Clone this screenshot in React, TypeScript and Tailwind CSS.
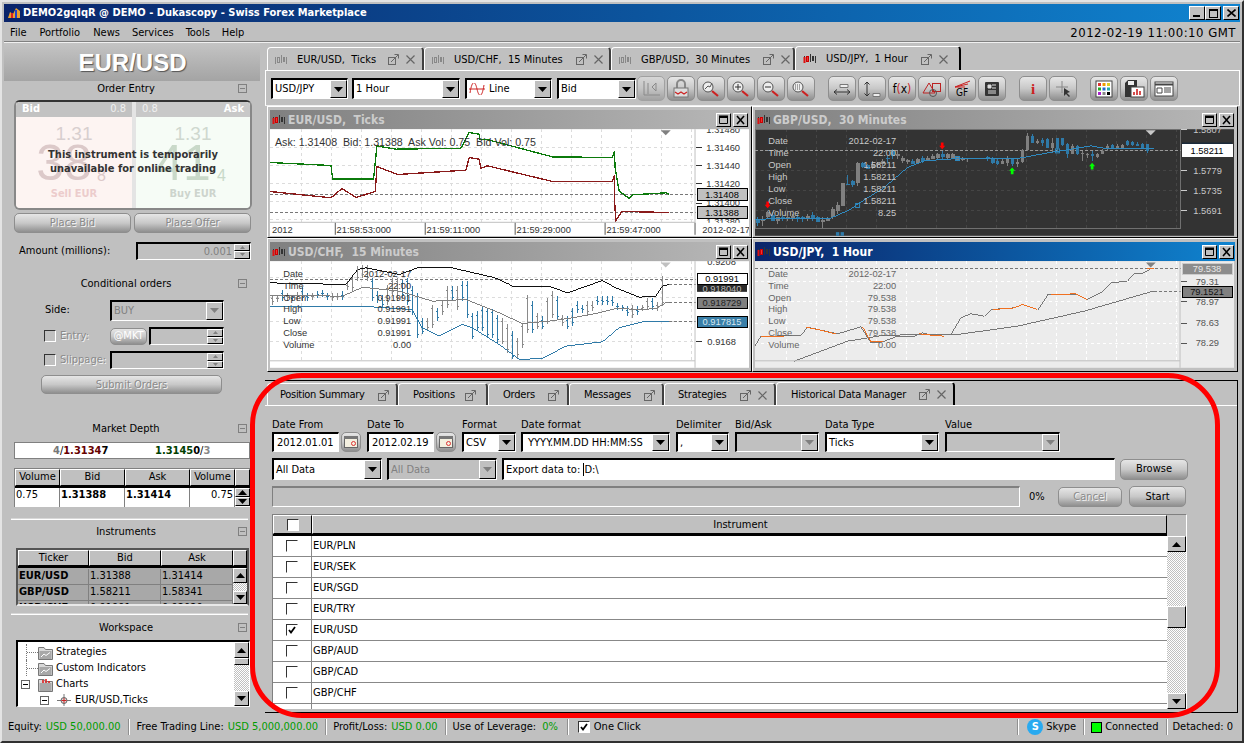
import React from "react";

const sunken = "border-t-2 border-l-2 border-b border-r border-t-black border-l-black border-b-white border-r-white";
const raised = "border border-t-white border-l-white border-b-black border-r-black bg-[#c0c0c0]";
const gradBtn = "flex items-center justify-center rounded-[5px] border border-[#8e8e8e] bg-gradient-to-b from-[#e6e6e6] via-[#c8c8c8] to-[#8f8f8f]";
const disText = "text-[#8a8a8a] [text-shadow:1px_1px_0_#f4f4f4]";
const chartFont = "font-['Liberation_Sans',sans-serif] whitespace-pre";

const Tri = ({ up = false, dim = false }: { up?: boolean; dim?: boolean }) => (
  <svg width="9" height="5" viewBox="0 0 9 5" className="shrink-0">
    <path d={up ? "M4.5 0 L9 5 L0 5 Z" : "M0 0 L9 0 L4.5 5 Z"} fill={dim ? "#808080" : "#000"} />
  </svg>
);

const Select = ({ w, h = "h-[21px]", children, dim = false }: { w: string; h?: string; children?: React.ReactNode; dim?: boolean }) => (
  <div className={`${w} ${h} shrink-0 flex ${sunken} ${dim ? "bg-[#c0c0c0] text-[#808080]" : "bg-white"}`}>
    <div className="flex-1 min-w-0 flex items-center pl-[2px] whitespace-nowrap overflow-hidden">{children}</div>
    <div className={`${raised} w-[17px] flex items-center justify-center`}><Tri dim={dim} /></div>
  </div>
);

const Spinner = ({ w, value }: { w: string; value?: string }) => (
  <div className={`${w} h-[18px] flex ${sunken} text-[#808080]`}>
    <div className="flex-1 text-right pr-[2px] leading-[15px]">{value}</div>
    <div className="w-[16px] flex flex-col">
      <div className={`${raised} flex-1 flex items-center justify-center`}><svg width="5" height="3"><path d="M2.5 0L5 3H0Z" fill="#808080" /></svg></div>
      <div className={`${raised} flex-1 flex items-center justify-center`}><svg width="5" height="3"><path d="M0 0H5L2.5 3Z" fill="#808080" /></svg></div>
    </div>
  </div>
);

const Collapse = () => (
  <div className="w-[9px] h-[9px] border border-[#808080] flex items-center justify-center shrink-0">
    <div className="w-[5px] h-px bg-[#808080]" />
  </div>
);

const Heading = ({ children, cls }: { children: React.ReactNode; cls: string }) => (
  <div className={`flex items-center h-[15px] ${cls}`}>
    <div className="ml-[10px] w-[224px] text-center">{children}</div>
    <Collapse />
  </div>
);

const CandleIcon = ({ color = false }: { color?: boolean }) => (
  <svg width="14" height="12" viewBox="0 0 14 12" className="shrink-0">
    <g stroke={color ? "#333" : "#888"} fill="none">
      <path d="M1.5 3V10M7.5 1V9M12.5 3V10" />
      <rect x="3.5" y="3.5" width="2" height="5" stroke={color ? "#c00" : "#888"} fill={color ? "#e33" : "none"} />
      <rect x="9.5" y="3.5" width="1" height="4" />
    </g>
    {color && <path d="M0.5 4h2v6h-2z" fill="#d11" />}
  </svg>
);

const Popout = () => (
  <svg width="11" height="11" viewBox="0 0 11 11" className="shrink-0">
    <rect x="0.5" y="3.5" width="7" height="7" fill="none" stroke="#666" />
    <path d="M3 8L10 1M6.5 0.5H10.5V4.5" fill="none" stroke="#666" />
  </svg>
);
const CloseX = () => (
  <svg width="9" height="9" viewBox="0 0 9 9" className="shrink-0">
    <path d="M0.5 0.5L8.5 8.5M8.5 0.5L0.5 8.5" stroke="#666" strokeWidth="1.2" />
  </svg>
);

const Tab = ({ w, label, active = false, close = true, icon = true, popGap, closeGap = "ml-[7px]", pl, hc, lc = "" }: { w: string; label: string; active?: boolean; close?: boolean; icon?: boolean; popGap: string; closeGap?: string; pl: string; hc?: string; lc?: string }) => (
  <div className={`${w} ${hc ?? (active ? "h-[24px]" : "h-[23px] mt-px")} ${active ? "border-r-2 border-r-black" : "border-r-2 border-r-[#404040]"} shrink-0 flex items-center ${pl} pt-px rounded-t-[4px] border-t border-l border-t-white border-l-white whitespace-nowrap`}>
    {icon && <div className="mr-[9px]"><CandleIcon color={active} /></div>}
    <span className={lc}>{label}</span>
    <div className={popGap}><Popout /></div>
    {close && <div className={closeGap}><CloseX /></div>}
  </div>
);

const ToolBtn = ({ ml = "ml-[2px]", children, dim = false }: { ml?: string; children: React.ReactNode; dim?: boolean }) => (
  <div className={`${ml} w-[28px] h-[25px] shrink-0 ${gradBtn} ${dim ? "opacity-60" : ""}`}>
    <svg width="22" height="20" viewBox="0 0 22 20">{children}</svg>
  </div>
);

const Mag = ({ children }: { children?: React.ReactNode }) => (
  <g>
    <circle cx="8" cy="8" r="5" fill="#eee" stroke="#555" />
    <path d="M12 12L18 17" stroke="#c22" strokeWidth="2.2" />
    {children}
  </g>
);

const gridV = (x0: number, x1: number, step: number, y0: number, y1: number, color: string) => {
  const out: React.ReactNode[] = [];
  for (let x = x0; x < x1; x += step) out.push(<line key={`v${x}`} x1={x} x2={x} y1={y0} y2={y1} stroke={color} strokeWidth="3" strokeDasharray="9 9" shapeRendering="crispEdges" />);
  return out;
};
const gridH = (ys: number[], x0: number, x1: number, color: string) =>
  ys.map((y) => <line key={`h${y}`} x1={x0} x2={x1} y1={y} y2={y} stroke={color} strokeWidth="3" strokeDasharray="9 9" shapeRendering="crispEdges" />);

const Line = ({ p, c, w = 3 }: { p: string; c: string; w?: number }) => <polyline points={p} fill="none" stroke={c} strokeWidth={w} shapeRendering="crispEdges" />;

const Dash = ({ y, x0, x1, c }: { y: number; x0: number; x1: number; c: string }) => (
  <line x1={x0} x2={x1} y1={y} y2={y} stroke={c} strokeWidth="3" strokeDasharray="9 6" shapeRendering="crispEdges" />
);

const Txt = ({ x, y, c, children, end = false, size = 28 }: { x: number; y: number; c: string; children: React.ReactNode; end?: boolean; size?: number }) => (
  <text x={x} y={y + 10} fontSize={size} fill={c} textAnchor={end ? "end" : "start"} className={chartFont}>{children}</text>
);

const Box = ({ y, h = 34, bg, bd, tc, children }: { y: number; h?: number; bg: string; bd: string; tc: string; children: React.ReactNode }) => (
  <g>
    <rect x="1294" y={y} width="150" height={h} fill={bg} stroke={bd} strokeWidth="3" shapeRendering="crispEdges" />
    <text x="1369" y={y + h / 2 + 10} fontSize="28" fill={tc} textAnchor="middle" className={chartFont}>{children}</text>
  </g>
);

const Tick = ({ y, c }: { y: number; c: string }) => <line x1="1290" x2="1310" y1={y} y2={y} stroke={c} strokeWidth="3" shapeRendering="crispEdges" />;

const Info = ({ vals, c, ys }: { vals: string[]; c: string; ys: number[] }) => (
  <g>
    {["Date", "Time", "Open", "High", "Low", "Close", "Volume"].map((l, i) => <Txt key={l} x={52} y={ys[i]} c={c}>{l}</Txt>)}
    {vals.map((v, i) => <Txt key={i} x={436} y={ys[i]} c={c} end>{v}</Txt>)}
  </g>
);

const Chart1 = () => (
  <svg viewBox="12 75 1438 320" className="w-[479px] h-[107px] block">
    <rect x="12" y="75" width="1438" height="320" fill="#fff" />
    {gridV(108, 1288, 90, 75, 355, "#dcdcdc")}
    {gridH([130, 184, 238, 292, 346], 12, 1288, "#dcdcdc")}
    <Dash y={271} x0={12} x1={1290} c="#777" />
    <Dash y={325} x0={12} x1={1290} c="#777" />
    <Line c="#0b7a0b" w={4} p="12,175 195,184 200,224 323,224 333,125 390,135 585,132 610,85 640,90 642,105 660,105 860,158 1040,160 1046,142 1048,190 1060,260 1090,283 1100,272 1200,266 1210,271" />
    <Line c="#8a1a1a" w={4} p="12,262 195,281 228,253 270,280 328,262 333,187 395,211 600,198 610,160 640,165 645,192 665,185 860,232 1040,232 1046,212 1046,280 1050,350 1068,322 1210,325" />
    <Txt x={27} y={114} c="#333" size={32}>Ask: 1.31408  Bid: 1.31388  Ask Vol: 0.75  Bid Vol: 0.75</Txt>
    <path d="M1185 78H1215L1200 93Z" fill="#808080" />
    <line x1="1288" x2="1288" y1="75" y2="395" stroke="#c0c0c0" strokeWidth="3" />
    {[130, 184, 238, 297].map((y) => <Tick key={y} y={y} c="#333" />)}
    {[["1.31480", 76], ["1.31460", 130], ["1.31440", 184], ["1.31420", 238], ["1.31400", 296], ["1.31380", 352]].map(([t, y]) => <Txt key={t} x={1322} y={y as number} c="#333">{t}</Txt>)}
    <Box y={254} bg="#c0c0c0" bd="#000" tc="#000">1.31408</Box>
    <Box y={308} bg="#c0c0c0" bd="#000" tc="#000">1.31388</Box>
    <rect x="12" y="356" width="1438" height="39" fill="#fff" />
    <rect x="12" y="353" width="1276" height="3" fill="#c0c0c0" />
    {[208, 478, 748, 1018, 1288].map((x) => <line key={x} x1={x} x2={x} y1="356" y2="392" stroke="#555" strokeWidth="3" />)}
    <Txt x={18} y={376} c="#333">2012</Txt>
    {[[212, "21:58:53:000"], [482, "21:59:11:000"], [752, "21:59:29:000"], [1022, "21:59:47:000"]].map(([x, t]) => <Txt key={t} x={x as number} y={376} c="#333">{t}</Txt>)}
    <Txt x={1310} y={376} c="#333">2012-02-17</Txt>
  </svg>
);

const bars: [number, number, number, number][] = [
  [20, 570, 600, 0], [35, 570, 592, 0], [50, 555, 590, 1], [65, 565, 590, 0], [80, 570, 590, 1], [95, 562, 585, 0], [110, 548, 590, 1], [125, 565, 590, 1], [140, 565, 585, 0], [155, 560, 580, 1], [170, 555, 578, 1], [185, 565, 585, 1], [200, 565, 590, 0], [215, 565, 585, 0], [230, 560, 585, 1],
  [245, 530, 555, 0], [260, 510, 560, 0], [275, 485, 530, 0], [290, 480, 520, 0], [305, 480, 530, 0], [320, 520, 590, 1], [335, 560, 595, 1], [350, 570, 610, 1], [365, 540, 600, 0], [380, 520, 570, 0], [395, 520, 590, 0], [410, 525, 580, 1], [425, 520, 600, 1], [440, 545, 630, 1], [455, 565, 700, 1], [470, 640, 690, 1], [485, 640, 680, 0], [500, 600, 670, 0], [515, 610, 650, 1], [530, 590, 630, 0], [545, 545, 610, 0], [560, 545, 590, 1], [575, 545, 615, 0], [590, 530, 590, 1], [605, 530, 640, 1],
  [620, 625, 705, 1], [635, 620, 680, 1], [650, 605, 680, 1], [665, 610, 700, 1], [680, 612, 700, 1], [695, 630, 715, 1], [710, 640, 720, 0], [725, 660, 745, 0], [740, 680, 765, 1], [755, 700, 760, 0], [770, 655, 730, 0], [785, 570, 685, 0], [800, 590, 685, 1], [815, 625, 675, 0], [830, 635, 675, 1], [845, 580, 660, 0], [860, 560, 640, 0], [875, 575, 645, 1], [890, 630, 665, 0], [905, 635, 675, 1], [920, 610, 665, 1], [935, 590, 625, 1], [950, 600, 625, 1], [965, 590, 630, 0], [980, 590, 620, 0], [995, 575, 600, 1], [1010, 575, 600, 1], [1025, 575, 600, 1], [1040, 575, 605, 1], [1055, 595, 615, 1], [1070, 600, 620, 1], [1085, 605, 635, 1], [1100, 600, 640, 0], [1115, 605, 630, 1], [1130, 600, 620, 0], [1145, 580, 615, 0], [1160, 580, 615, 1], [1175, 592, 618, 0], [1190, 515, 605, 0],
];

const Chart2 = () => (
  <svg viewBox="12 470 1438 320" className="w-[479px] h-[107px] block">
    <rect x="12" y="470" width="1438" height="320" fill="#fff" />
    {gridV(108, 1288, 90, 470, 768, "#dcdcdc")}
    {gridH([520, 580, 650, 710], 12, 1288, "#dcdcdc")}
    <Dash y={524} x0={12} x1={1290} c="#777" />
    {bars.map(([x, a, b, k]) => (
      <g key={x} stroke={k ? "#2f7aa8" : "#8a8a8a"} strokeWidth="3" shapeRendering="crispEdges">
        <line x1={x} x2={x} y1={a} y2={b} />
        <line x1={x - 5} x2={x} y1={a + 12} y2={a + 12} />
        <line x1={x} x2={x + 5} y1={b - 10} y2={b - 10} />
      </g>
    ))}
    <Line c="#111" p="12,535 240,540 275,495 300,490 400,510 460,488 550,488 680,518 740,545 850,545 905,565 1010,528 1050,550 1120,578 1170,575 1190,545 1210,540" />
    <Line c="#808080" p="12,572 230,575 290,548 400,560 500,590 600,585 700,625 770,657 850,650 920,640 1000,625 1050,612 1130,615 1170,612 1200,595 1210,595" />
    <Line c="#2f7aa8" p="12,606 300,606 440,615 470,670 520,695 590,660 620,670 700,720 760,765 830,762 900,725 1010,712 1060,670 1130,652 1210,652" />
    <Dash y={541} x0={1210} x1={1290} c="#777" />
    <Dash y={595} x0={1210} x1={1290} c="#777" />
    <Dash y={652} x0={1210} x1={1290} c="#777" />
    <Info c="#333" ys={[506, 542, 578, 614, 650, 686, 722]} vals={["2012-02-17", "22:00", "0.91991", "0.91991", "0.91991", "0.91991", "0.00"]} />
    <path d="M1185 474H1215L1200 489Z" fill="#c0c0c0" />
    <line x1="1288" x2="1288" y1="470" y2="790" stroke="#c0c0c0" strokeWidth="3" />
    <line x1="12" x2="1288" y1="769" y2="769" stroke="#c0c0c0" strokeWidth="3" />
    <Tick y={712} c="#333" />
    <Txt x={1325} y={472} c="#333">0.9208</Txt>
    <Txt x={1325} y={712} c="#333">0.9168</Txt>
    <rect x="1294" y="538" width="150" height="24" fill="#2a2a2a" />
    <text x="1369" y="562" fontSize="28" fill="#bbb" textAnchor="middle" className={chartFont}>0.918040</text>
    <Box y={506} bg="#fff" bd="#000" tc="#000">0.91991</Box>
    <Box y={578} bg="#808080" bd="#000" tc="#222">0.918729</Box>
    <Box y={635} bg="#3a7fa8" bd="#000" tc="#d8e8f0">0.917815</Box>
  </svg>
);

const candles: [number, number, number, number, number, number][] = [
  [20, 340, 365, 345, 358, 1], [35, 335, 365, 345, 352, 0], [50, 320, 345, 325, 340, 0], [65, 325, 350, 332, 350, 1], [80, 340, 360, 340, 350, 0], [95, 335, 350, 340, 346, 1], [110, 335, 350, 338, 345, 0], [125, 330, 350, 336, 342, 0], [140, 330, 355, 340, 345, 1], [155, 335, 355, 340, 344, 1], [170, 330, 350, 336, 342, 0], [185, 325, 350, 332, 342, 1], [200, 335, 355, 338, 355, 1], [215, 340, 372, 348, 355, 0], [230, 340, 350, 341, 350, 0], [245, 310, 345, 315, 340, 0], [260, 295, 330, 302, 320, 0], [275, 235, 305, 237, 305, 0], [290, 212, 243, 240, 243, 1], [305, 228, 248, 230, 243, 1], [320, 172, 245, 176, 235, 0], [335, 172, 190, 175, 188, 1], [350, 178, 195, 182, 195, 1], [365, 170, 195, 180, 190, 0], [380, 172, 190, 175, 182, 0], [395, 165, 185, 170, 178, 0], [410, 155, 175, 160, 165, 1], [425, 135, 165, 140, 155, 1], [440, 140, 165, 148, 155, 0], [455, 155, 175, 160, 170, 0], [470, 165, 178, 168, 174, 0], [485, 165, 180, 170, 178, 1], [500, 160, 178, 165, 175, 0], [515, 155, 175, 160, 170, 1], [530, 155, 170, 160, 168, 0], [545, 150, 165, 155, 165, 0], [560, 145, 165, 150, 160, 0], [575, 140, 165, 150, 158, 1], [590, 145, 165, 148, 162, 0], [605, 145, 165, 150, 162, 0], [620, 155, 170, 158, 168, 0], [635, 158, 170, 160, 168, 0], [650, 160, 172, 162, 165, 0], [710, 155, 170, 158, 165, 1], [725, 158, 178, 165, 175, 1], [740, 165, 182, 170, 178, 1], [755, 165, 180, 170, 178, 0], [770, 155, 185, 160, 175, 0], [785, 160, 185, 160, 180, 1], [800, 165, 188, 172, 180, 0], [815, 135, 175, 138, 172, 0], [830, 85, 140, 95, 138, 0], [845, 90, 115, 95, 115, 1], [860, 105, 120, 110, 115, 0], [875, 102, 125, 108, 115, 1], [890, 100, 130, 104, 130, 1], [905, 100, 145, 115, 130, 0], [920, 100, 140, 102, 130, 1], [935, 100, 125, 102, 122, 1], [950, 115, 160, 120, 150, 1], [965, 120, 150, 125, 150, 0], [980, 122, 152, 125, 150, 1], [995, 140, 170, 145, 150, 0], [1010, 145, 160, 150, 152, 0], [1025, 140, 170, 148, 155, 1], [1040, 145, 160, 148, 158, 0], [1055, 135, 150, 140, 150, 0], [1070, 120, 140, 124, 135, 0], [1085, 120, 135, 122, 132, 1], [1100, 118, 132, 124, 130, 0], [1115, 120, 130, 122, 130, 0], [1130, 108, 125, 110, 122, 1], [1145, 110, 125, 112, 122, 1], [1160, 112, 125, 120, 125, 1], [1175, 115, 130, 120, 130, 1], [1190, 118, 145, 120, 140, 1],
];

const UpArrow = ({ x, y, c }: { x: number; y: number; c: string }) => (
  <path d={`M${x} ${y - 10}L${x + 9} ${y}H${x + 4}V${y + 10}H${x - 4}V${y}H${x - 9}Z`} fill={c} />
);
const DownArrow = ({ x, y, c }: { x: number; y: number; c: string }) => (
  <path d={`M${x} ${y + 10}L${x + 9} ${y}H${x + 4}V${y - 10}H${x - 4}V${y}H${x - 9}Z`} fill={c} />
);

const Chart3 = () => (
  <svg viewBox="12 75 1438 320" className="w-[479px] h-[107px] block">
    <rect x="12" y="75" width="1438" height="320" fill="#333" />
    {gridV(108, 1288, 90, 75, 372, "#454545")}
    {gridH([140, 200, 260, 320], 12, 1288, "#454545")}
    <rect x="13" y="76" width="1275" height="296" fill="none" stroke="#707070" strokeWidth="3" shapeRendering="crispEdges" />
    <Dash y={138} x0={12} x1={1290} c="#999" />
    {candles.map(([x, a, b, t, bt, k]) => (
      <g key={x} shapeRendering="crispEdges" fill={k ? "#2f7aa8" : "#808080"}>
        <rect x={x - 1} y={a} width="3" height={b - a} />
        <rect x={x - 5} y={t} width="11" height={bt - t} />
      </g>
    ))}
    <Line c="#2f8ac0" p="12,345 240,342 300,315 320,300 400,250 470,190 520,170 620,163 800,163 880,148 960,135 1020,125 1060,132 1210,133" />
    {[[320, 304], [620, 163], [920, 140]].map(([x, y]) => <rect key={x} x={x - 6} y={y - 6} width="12" height="12" fill="none" stroke="#2f8ac0" strokeWidth="3" />)}
    <rect x="255" y="384" width="10" height="11" fill="#2f7aa8" /><rect x="269" y="384" width="10" height="11" fill="#2f7aa8" />
    <DownArrow x={50} y={302} c="#f00" />
    <DownArrow x={574} y={125} c="#f00" />
    <UpArrow x={784} y={200} c="#0f0" />
    <UpArrow x={1024} y={186} c="#0f0" />
    <Info c="#c8c8c8" ys={[110, 146, 182, 218, 254, 290, 326]} vals={["2012-02-17", "22:00", "1.58211", "1.58211", "1.58211", "1.58211", "8.25"]} />
    <path d="M1185 78H1215L1200 93Z" fill="#c8c8c8" />
    {[200, 260, 320].map((y) => <Tick key={y} y={y} c="#ccc" />)}
    <Tick y={76} c="#ccc" />
    <Txt x={1328} y={76} c="#c8c8c8">1.5807</Txt>
    <Txt x={1328} y={200} c="#c8c8c8">1.5779</Txt>
    <Txt x={1328} y={260} c="#c8c8c8">1.5735</Txt>
    <Txt x={1328} y={320} c="#c8c8c8">1.5691</Txt>
    <rect x="1294" y="115" width="150" height="8" fill="#1a2a3a" />
    <Box y={122} bg="#fff" bd="#fff" tc="#000">1.58211</Box>
  </svg>
);

const Chart4 = () => (
  <svg viewBox="12 470 1438 320" className="w-[479px] h-[107px] block">
    <rect x="12" y="470" width="1438" height="320" fill="#ececec" />
    {gridV(108, 1288, 90, 470, 768, "#fff")}
    {gridH([532, 592, 656, 716], 12, 1288, "#fff")}
    <Dash y={493} x0={12} x1={1290} c="#777" />
    <Dash y={562} x0={1210} x1={1290} c="#777" />
    <Line c="#777" p="130,770 290,710 400,692 620,690 800,665 1000,620 1200,562 1210,562" />
    <Line c="#777" p="12,725 30,695 60,695 150,693 170,668 200,675 260,688 330,667 360,715 395,712 440,695 490,695 515,685 540,692 600,690 630,640 660,628 700,635 720,615 790,610 815,600 860,615 890,570 980,570 1010,585 1050,565 1080,535 1130,530 1150,508 1180,505 1200,493 1210,493" />
    <g>
      <Line c="#f07020" p="30,695 60,695 100,695" />
      <Line c="#f07020" p="165,668 200,675 255,688" />
      <Line c="#f07020" p="335,667 360,712 395,712" />
      <Line c="#f07020" p="505,688 540,692 580,695" />
      <Line c="#f07020" p="725,615 790,610 815,600 860,615" />
      <Line c="#f07020" p="900,570 975,568 1010,585" />
      <Line c="#f07020" p="1190,493 1210,493" />
    </g>
    <Info c="#666" ys={[506, 542, 578, 614, 650, 686, 722]} vals={["2012-02-17", "22:00", "79.538", "79.538", "79.538", "79.538", "0.00"]} />
    <path d="M1185 474H1215L1200 489Z" fill="#808080" />
    <line x1="1288" x2="1288" y1="470" y2="790" stroke="#c0c0c0" strokeWidth="3" />
    <line x1="12" x2="1288" y1="769" y2="769" stroke="#c0c0c0" strokeWidth="3" />
    {[532, 592, 656, 716].map((y) => <Tick key={y} y={y} c="#555" />)}
    {[["79.31", 532], ["78.97", 592], ["78.63", 656], ["78.29", 716]].map(([t, y]) => <Txt key={t} x={1335} y={y as number} c="#555">{t}</Txt>)}
    <Box y={476} bg="#8c8c8c" bd="#ccc" tc="#e8e8e8">79.538</Box>
    <Box y={545} bg="#808080" bd="#000" tc="#111">79.1521</Box>
  </svg>
);

const WinBtn = ({ kind }: { kind: "max" | "close" }) => (
  <div className={`${raised} w-[15px] h-[14px] flex items-center justify-center`}>
    <svg width="11" height="10" viewBox="0 0 11 10">
      {kind === "max" ? <path d="M1.5 1.5H9.5V8.5H1.5Z M1 1H10" fill="none" stroke="#000" strokeWidth="1" /> : <path d="M2 1L9 9M9 1L2 9" stroke="#000" strokeWidth="1.6" />}
      {kind === "max" && <rect x="1" y="1" width="9" height="2" fill="#000" />}
    </svg>
  </div>
);

const ChartWin = ({ title, active = false, h, children }: { title: string; active?: boolean; h: string; children: React.ReactNode }) => (
  <div className={`${h} border border-t-white border-l-white border-b-black border-r-black pt-[3px] px-[2px]`}>
    <div className={`h-[19px] flex items-center pl-[2px] pr-[1px] ${active ? "bg-gradient-to-r from-[#0a246a] to-[#1084d0] text-white" : "bg-gradient-to-r from-[#808080] to-[#b8b8b8] text-[#cccccc]"}`}>
      <CandleIcon color />
      <span className="ml-[2px] text-[12px] font-bold whitespace-pre flex-1">{title}</span>
      <div className="flex gap-[2px]"><WinBtn kind="max" /><WinBtn kind="close" /></div>
    </div>
    {children}
  </div>
);

const Check = ({ on = false, dim = false, cls = "" }: { on?: boolean; dim?: boolean; cls?: string }) => (
  <div className={`w-[12px] h-[12px] ${cls} border-t border-l border-t-[#333] border-l-[#333] border-b border-r border-b-white border-r-white ${dim ? "" : "bg-white"} flex items-center justify-center shrink-0`}>
    {on && <svg width="8" height="8" viewBox="0 0 8 8"><path d="M1 4L3 6.5L7 1" fill="none" stroke="#000" strokeWidth="1.8" /></svg>}
  </div>
);

const ScrollBtn = ({ up = false, cls }: { up?: boolean; cls: string }) => (
  <div className={`${raised} ${cls} flex items-center justify-center shrink-0`}><Tri up={up} /></div>
);
const checker = "bg-[repeating-conic-gradient(#c0c0c0_0_25%,#fff_0_50%)] bg-[length:2px_2px]";

const Cal = () => (
  <div className={`ml-[2px] w-[20px] h-[20px] shrink-0 ${gradBtn}`}>
    <svg width="14" height="12" viewBox="0 0 14 12">
      <rect x="0.5" y="0.5" width="13" height="11" fill="#f4f0e0" stroke="#666" />
      <rect x="0" y="0" width="14" height="3" fill="#777" />
      <circle cx="9.5" cy="7.5" r="2" fill="none" stroke="#d33" />
    </svg>
  </div>
);

const Field = ({ label, ml, children }: { label: string; ml: string; children: React.ReactNode }) => (
  <div className={`${ml} flex flex-col shrink-0`}>
    <div className="h-[15px] leading-[15px] whitespace-nowrap">{label}</div>
    <div className="flex">{children}</div>
  </div>
);

const rows = [["EUR/PLN"], ["EUR/SEK"], ["EUR/SGD"], ["EUR/TRY"], ["EUR/USD", true], ["GBP/AUD"], ["GBP/CAD"], ["GBP/CHF"]] as [string, boolean?][];

const Folder = ({ open = false }: { open?: boolean }) => (
  <svg width="15" height="15" viewBox="0 0 15 15" className="shrink-0">
    <path d="M0.5 2.5H6L7.5 4.5H14.5V14.5H0.5Z" fill="#d8d8d8" stroke="#777" />
    <rect x="1.5" y="6" width="12" height="8" fill="#a8a8a8" />
    {open ? <path d="M5 6V3M8 6V2M11 6V4" stroke="#d22" strokeWidth="1.6" /> : <path d="M3 12L6 9L8 10.5L12 7.5" fill="none" stroke="#fff" />}
  </svg>
);

const Expander = () => (
  <div className="w-[9px] h-[9px] border border-[#666] bg-white flex items-center justify-center shrink-0">
    <div className="w-[5px] h-px bg-black" />
  </div>
);

const Connector = () => (
  <div className="w-[12px] h-full border-l border-dotted border-l-[#777] flex items-center shrink-0">
    <div className="w-full border-t border-dotted border-t-[#777]" />
  </div>
);

const Sep = ({ ml }: { ml: string }) => <div className={`${ml} w-[2px] h-[16px] bg-[#909090] border-r border-r-white shrink-0`} />;

export default function App() {
  return (
    <div className="relative w-[1244px] h-[743px] overflow-hidden bg-[#c0c0c0] text-black text-[11px] leading-[14px] font-['DejaVu_Sans_Condensed','DejaVu_Sans',sans-serif]">
      <div className="w-full h-full flex flex-col p-[2px] border-[2px] border-t-[#e4e4e4] border-l-[#e4e4e4] border-b-[#303030] border-r-[#303030]">
        {/* title bar */}
        <div className="h-[18px] shrink-0 flex items-center pl-[3px] pr-[1px] bg-gradient-to-r from-[#0a246a] to-[#1084d0] text-white text-[11px] font-bold">
          <svg width="14" height="14" viewBox="0 0 14 14" className="shrink-0 mr-[2px]">
            <path d="M1 12L3 6L6 8L9 2L13 5V12Z" fill="#e8a030" />
            <path d="M4 12V7H6V12Z" fill="#d22" /><path d="M8 12V4H10V12Z" fill="#2244cc" />
          </svg>
          <span className="flex-1 whitespace-nowrap">DEMO2gqIqR @ DEMO - Dukascopy - Swiss Forex Marketplace</span>
          <div className="flex">
            <div className={`${raised} w-[16px] h-[14px] flex items-end pl-[3px] pb-[2px]`}><div className="w-[7px] h-[2px] bg-black" /></div>
            <div className={`${raised} w-[16px] h-[14px] flex items-center justify-center`}><div className="w-[9px] h-[9px] border border-black border-t-2" /></div>
            <div className={`${raised} ml-[2px] w-[16px] h-[14px] flex items-center justify-center`}><svg width="9" height="8"><path d="M0.5 0.5L8.5 7.5M8.5 0.5L0.5 7.5" stroke="#000" strokeWidth="1.6" /></svg></div>
          </div>
        </div>
        {/* menu */}
        <div className="h-[21px] shrink-0 flex items-center pl-[6px] pt-px border-b border-b-[#f0f0f0] shadow-[inset_0_-1px_0_#808080]">
          <span>File</span><span className="ml-[13px]">Portfolio</span><span className="ml-[13px]">News</span><span className="ml-[12px]">Services</span><span className="ml-[12px]">Tools</span><span className="ml-[12px]">Help</span>
          <span className="ml-auto mr-[4px] text-[13px] tracking-[0.5px]">2012-02-19 11:00:10 GMT</span>
        </div>
        {/* main */}
        <div className="h-[674px] shrink-0 flex">
          {/* left */}
          <div className="w-[256px] shrink-0 flex flex-col">
            <div className="h-[38px] shrink-0 flex items-center justify-center pt-px pl-px bg-gradient-to-b from-[#c4c4c4] to-[#a4a4a4] text-white text-[24px] font-bold font-['Liberation_Sans',sans-serif] [text-shadow:1px_1px_1px_#555]">EUR/USD</div>
            <Heading cls="">Order Entry</Heading>
            <div className="relative ml-[10px] mt-[4px] w-[238px] h-[110px] shrink-0 rounded-[6px] border-2 border-t-[#333] border-l-[#888] border-r-[#888] border-b-[#888] overflow-hidden flex bg-[#e8e8e8]">
              <div className="w-[116px] flex flex-col bg-[#fdf4f2]">
                <div className="h-[15px] shrink-0 bg-[#c2c2c2] flex justify-between px-[6px] text-white"><b>Bid</b><span className="text-[#f0f0f0]">0.8</span></div>
                <div className="text-center text-[19px] leading-[24px] mt-[5px] text-[#d8cfcf] font-['Liberation_Sans',sans-serif]">1.31</div>
                <div className="pr-[20px] text-center text-[50px] leading-[34px] text-[#dcc9c9] font-['Liberation_Sans',sans-serif]">38</div>
                <div className="mt-[7px] text-center font-bold text-[11px] text-[#eccccc]">Sell EUR</div>
              </div>
              <div className="w-[4px] bg-[#e4e4e4]" />
              <div className="flex-1 flex flex-col bg-[#f6fcf6]">
                <div className="h-[15px] shrink-0 bg-[#c8c8c8] flex justify-between px-[6px] text-white"><span className="text-[#f0f0f0]">0.8</span><b>Ask</b></div>
                <div className="text-center text-[19px] leading-[24px] mt-[5px] text-[#cfd8cf] font-['Liberation_Sans',sans-serif]">1.31</div>
                <div className="pr-[20px] text-center text-[50px] leading-[34px] text-[#c9d9c9] font-['Liberation_Sans',sans-serif]">41</div>
                <div className="mt-[7px] text-center font-bold text-[11px] text-[#cdd4cd]">Buy EUR</div>
              </div>
              <div className="absolute left-[81px] top-[66px] text-[16px] text-[#dcc9c9] font-['Liberation_Sans',sans-serif] leading-[16px]">8</div>
              <div className="absolute left-[201px] top-[66px] text-[16px] text-[#c9d9c9] font-['Liberation_Sans',sans-serif] leading-[16px]">4</div>
              <div className="absolute inset-x-0 top-[46px] text-center font-bold text-[11px] text-[#333] leading-[14px]">This instrument is temporarily<br />unavailable for online trading</div>
            </div>
            <div className={`ml-[10px] mt-[3px] flex gap-[3px] ${disText}`}>
              <div className={`w-[117px] h-[20px] ${gradBtn}`}>Place Bid</div>
              <div className={`w-[117px] h-[20px] ${gradBtn}`}>Place Offer</div>
            </div>
            <div className="mt-[8px] h-[19px] flex items-center pl-[15px]">
              <div className="w-[117px]">Amount (millions):</div>
              <Spinner w="w-[115px]" value="0.001" />
            </div>
            <Heading cls="mt-[16px]">Conditional orders</Heading>
            <div className="mt-[8px] h-[22px] flex items-center pl-[41px]">
              <div className="w-[65px]">Side:</div>
              <Select w="w-[114px]" dim>BUY</Select>
            </div>
            <div className="mt-[6px] h-[18px] flex items-center pl-[40px]">
              <Check dim />
              <div className={`ml-[4px] w-[50px] ${disText}`}>Entry:</div>
              <div className={`w-[37px] h-[17px] ${gradBtn} text-white`}>@MKT</div>
              <div className="ml-[2px]"><Spinner w="w-[75px]" /></div>
            </div>
            <div className="mt-[6px] h-[18px] flex items-center pl-[40px]">
              <Check dim />
              <div className={`ml-[4px] w-[50px] ${disText}`}>Slippage:</div>
              <Spinner w="w-[114px]" />
            </div>
            <div className={`ml-[37px] mt-[6px] w-[181px] h-[19px] ${gradBtn} ${disText}`}>Submit Orders</div>
            <Heading cls="mt-[27px]">Market Depth</Heading>
            <div className="ml-[10px] mt-[6px] w-[236px] h-[17px] bg-white border border-[#808080] flex items-center font-bold text-[11px]">
              <div className="ml-[38px] w-[102px]"><span className="text-[#777]">4</span><span className="font-normal">/</span><span className="text-[#660000]">1.3134</span>7</div>
              <div><span className="text-[#004000]">1.3145</span>0<span className="font-normal">/</span><span className="text-[#888]">3</span></div>
            </div>
            <div className="ml-[10px] mt-[9px] w-[236px] h-[39px] flex flex-col border-t border-l border-[#808080] bg-white">
              <div className="h-[19px] flex bg-[#c0c0c0] border-b-2 border-b-black text-center">
                <div className={`${raised} w-[45px]`}>Volume</div>
                <div className={`${raised} w-[65px]`}>Bid</div>
                <div className={`${raised} w-[65px]`}>Ask</div>
                <div className={`${raised} w-[45px]`}>Volume</div>
                <div className={`${raised} flex-1`} />
              </div>
              <div className="flex-1 flex">
                <div className="w-[45px] border-r border-r-[#808080] pl-px">0.75</div>
                <div className="w-[65px] border-r border-r-[#808080] pl-px font-bold text-[11px]">1.31388</div>
                <div className="w-[65px] border-r border-r-[#808080] pl-px font-bold text-[11px]">1.31414</div>
                <div className="w-[45px] border-r border-r-[#808080] text-right pr-px">0.75</div>
                <div className="flex-1 flex flex-col"><ScrollBtn up cls="h-[9px]" /><ScrollBtn cls="h-[9px]" /></div>
              </div>
            </div>
            <div className="ml-[7px] mt-[11px] w-[237px] h-[2px] bg-[#d8d8d8] border-b border-b-white shrink-0" />
            <Heading cls="mt-[4px]">Instruments</Heading>
            <div className="ml-[12px] mt-[9px] w-[233px] h-[58px] flex flex-col border-2 border-t-[#555] border-l-[#555] border-b-[#e8e8e8] border-r-[#555] bg-[#a8a8a8] overflow-hidden">
              <div className="h-[18px] shrink-0 flex text-center bg-[#c0c0c0] border-b-2 border-b-black">
                <div className={`${raised} w-[71px]`}>Ticker</div>
                <div className={`${raised} w-[72px]`}>Bid</div>
                <div className={`${raised} w-[72px]`}>Ask</div>
                <div className={`${raised} flex-1`} />
              </div>
              <div className="flex-1 flex min-h-0">
                <div className="flex-1 flex flex-col pt-px">
                  {[["EUR/USD", "1.31388", "1.31414"], ["GBP/USD", "1.58211", "1.58341"], ["USD/CHF", "0.91991", "0.92020"]].map((r) => (
                    <div key={r[0]} className="h-[16px] shrink-0 flex border-b border-b-[#808080]">
                      <div className="w-[71px] pl-px font-bold text-[11px] border-r border-r-[#808080]">{r[0]}</div>
                      <div className="w-[72px] pl-px border-r border-r-[#808080]">{r[1]}</div>
                      <div className="w-[72px] pl-px border-r border-r-[#808080]">{r[2]}</div>
                    </div>
                  ))}
                </div>
                <div className={`w-[15px] flex flex-col ${checker}`}><ScrollBtn up cls="h-[15px]" /><div className="h-[8px]" /><ScrollBtn cls="h-[13px]" /></div>
              </div>
            </div>
            <div className="ml-[7px] mt-[7px] w-[237px] h-[2px] bg-[#d8d8d8] border-b border-b-white shrink-0" />
            <Heading cls="mt-[5px]">Workspace</Heading>
            <div className={`ml-[12px] mt-[5px] w-[234px] h-[67px] flex bg-white overflow-hidden ${sunken}`}>
              <div className="flex-1 flex flex-col pt-[2px]">
                <div className="h-[16px] flex items-center pl-[8px] shrink-0"><Connector /><Folder /><span className="ml-[3px]">Strategies</span></div>
                <div className="h-[16px] flex items-center pl-[8px] shrink-0"><Connector /><Folder /><span className="ml-[3px]">Custom Indicators</span></div>
                <div className="h-[16px] flex items-center pl-[3px] shrink-0"><Expander /><div className="ml-[8px]"><Folder open /></div><span className="ml-[3px]">Charts</span></div>
                <div className="h-[16px] flex items-center pl-[22px] shrink-0"><Expander />
                  <svg width="14" height="13" viewBox="0 0 14 13" className="ml-[8px] shrink-0"><path d="M7 0V13M0 6.5H14" stroke="#777" /><circle cx="7" cy="6.5" r="3" fill="#ddd" stroke="#666" /><path d="M7 4V9M4.5 6.5H9.5" stroke="#c22" /></svg>
                  <span className="ml-[4px]">EUR/USD,Ticks</span></div>
                <div className="ml-[75px] w-[62px] h-px bg-[#000080] shrink-0" />
              </div>
              <div className={`w-[15px] flex flex-col ${checker}`}>
                <ScrollBtn up cls="h-[16px]" /><div className={`${raised} h-[7px]`} /><div className="flex-1" /><ScrollBtn cls="h-[15px]" />
              </div>
            </div>
          </div>
          {/* right */}
          <div className="ml-[5px] w-[975px] shrink-0 flex flex-col">
            <div className="mt-[3px] h-[24px] shrink-0 flex pl-[2px]">
              <Tab w="w-[157px]" pl="pl-[6px]" label="EUR/USD,  Ticks" lc="whitespace-pre" popGap="ml-[12px]" />
              <Tab w="w-[187px]" pl="pl-[6px]" label="USD/CHF,  15 Minutes" lc="whitespace-pre" popGap="ml-[13px]" />
              <Tab w="w-[184px]" pl="pl-[6px]" label="GBP/USD,  30 Minutes" lc="whitespace-pre" popGap="ml-[13px]" />
              <Tab w="w-[166px]" pl="pl-[7px]" label="USD/JPY,  1 Hour" lc="whitespace-pre" active popGap="ml-[13px]" />
            </div>
            <div className="h-[36px] shrink-0 flex items-center pl-[5px] pt-px border border-t-white border-l-white border-r-white border-b-[#f0f0f0]">
              <Select w="w-[77px]">USD/JPY</Select>
              <div className="ml-[4px]"><Select w="w-[108px]">1 Hour</Select></div>
              <div className="ml-[5px]">
                <Select w="w-[87px]">
                  <svg width="16" height="12" viewBox="0 0 16 12" className="mr-[4px] shrink-0"><path d="M0 6H16" stroke="#c22" /><path d="M1 10C3 -3 6 -3 8 6C10 15 13 15 15 2" fill="none" stroke="#c22" /></svg>Line
                </Select>
              </div>
              <div className="ml-[5px]"><Select w="w-[79px]">Bid</Select></div>
              <ToolBtn ml="ml-px" dim><path d="M4 2V16H20M8 4V15M12 8L16 4V12Z" fill="none" stroke="#666" /></ToolBtn>
              <ToolBtn><path d="M7 9V5A4 4 0 0 1 15 5V9" fill="none" stroke="#888" strokeWidth="2" /><rect x="4" y="9" width="14" height="9" fill="#ddd" stroke="#777" /><path d="M5 13L8 15L11 13L14 15L17 13" fill="none" stroke="#c22" strokeWidth="1.2" /></ToolBtn>
              <ToolBtn><Mag><path d="M5 10L8 7L10 8L12 4" fill="none" stroke="#555" /></Mag></ToolBtn>
              <ToolBtn><Mag><path d="M5 8H11M8 5V11" stroke="#333" /></Mag></ToolBtn>
              <ToolBtn><Mag><path d="M5 8H11" stroke="#333" /></Mag></ToolBtn>
              <ToolBtn><Mag><path d="M5 8H11M5 10H11M5 6H11" stroke="#555" strokeDasharray="1 1" /></Mag></ToolBtn>
              <ToolBtn ml="ml-[13px]"><path d="M9 5.5H17V8.5H9Z" fill="#eee" stroke="#777" /><path d="M3 13H19M6 10.5L3 13L6 15.5M16 10.5L19 13L16 15.5" fill="none" stroke="#333" /></ToolBtn>
              <ToolBtn><path d="M6 3V17M3.5 5.5L6 3L8.5 5.5M3.5 14.5L6 17L8.5 14.5" fill="none" stroke="#333" /><path d="M12 14.5H19V17.5H12Z" fill="#eee" stroke="#777" /></ToolBtn>
              <div className={`ml-[2px] w-[28px] h-[25px] shrink-0 ${gradBtn} text-[12px]`}>f<span className="text-[#c22]">(</span>x<span className="text-[#c22]">)</span></div>
              <ToolBtn><path d="M2 14L8 4L14 14Z" fill="none" stroke="#b22" /><rect x="11.5" y="4.5" width="8" height="8" fill="none" stroke="#b22" /><circle cx="12" cy="14" r="3.5" fill="none" stroke="#555" /></ToolBtn>
              <div className={`ml-[2px] w-[28px] h-[25px] shrink-0 ${gradBtn} flex-col text-[10px] leading-[9px]`}>
                <svg width="18" height="8" viewBox="0 0 18 8"><path d="M2 7L17 1M2 7L15 4M2 7L12 7" stroke="#c22" /></svg>
                <span>GF</span>
              </div>
              <ToolBtn><rect x="4" y="3" width="14" height="14" rx="1" fill="#333" /><path d="M7 6H10V9H7ZM11 6H15M11 9H15M7 12H15M7 14H15" stroke="#ddd" fill="#ddd" /></ToolBtn>
              <div className={`ml-[13px] w-[28px] h-[25px] shrink-0 ${gradBtn} font-bold text-[15px] text-[#c22] font-['Liberation_Serif',serif]`}>i</div>
              <ToolBtn><path d="M10 2V14M4 8H16" stroke="#888" /><path d="M12 9L12 17L14 15L17 18L18 17L15 14L18 13Z" fill="#333" /></ToolBtn>
              <ToolBtn ml="ml-[13px]">
                <rect x="3" y="2" width="16" height="16" fill="#fff" stroke="#444" />
                <path d="M5 4h3v3H5z" fill="#d33" /><path d="M9.5 4h3v3h-3z" fill="#e90" /><path d="M14 4h3v3h-3z" fill="#dc2" /><path d="M5 8.5h3v3H5z" fill="#2a2" /><path d="M9.5 8.5h3v3h-3z" fill="#26c" /><path d="M14 8.5h3v3h-3z" fill="#2aa" /><path d="M5 13h3v3H5z" fill="#a2c" /><path d="M9.5 13h3v3h-3z" fill="#888" /><path d="M14 13h3v3h-3z" fill="#000" />
              </ToolBtn>
              <ToolBtn><path d="M2 4L5 1H14V8H8V18H2Z" fill="#333" /><path d="M5 2H11V6H5Z" fill="#eee" /><rect x="8" y="8" width="13" height="10" fill="#fff" stroke="#444" /><path d="M11 16V13M14 16V10M17 16V12" stroke="#c22" strokeWidth="1.6" /></ToolBtn>
              <ToolBtn><rect x="2" y="3" width="18" height="14" fill="#fff" stroke="#444" /><path d="M2 5.5H20" stroke="#444" strokeWidth="2" /><path d="M4 9H9V14H4ZM11 9H18M11 11H18M11 13H18" fill="none" stroke="#444" /></ToolBtn>
            </div>
            <div className="ml-[2px] w-[971px] grid grid-cols-[485px_486px] grid-rows-[132px_134px] shrink-0">
              <ChartWin title="EUR/USD,  Ticks" h="h-[132px]"><Chart1 /></ChartWin>
              <ChartWin title="GBP/USD,  30 Minutes" h="h-[132px]"><Chart3 /></ChartWin>
              <ChartWin title="USD/CHF,  15 Minutes" h="h-[134px]"><Chart2 /></ChartWin>
              <ChartWin title="USD/JPY,  1 Hour" active h="h-[134px]"><Chart4 /></ChartWin>
            </div>
            {/* bottom panel */}
            <div className="mt-[8px] h-[333px] w-[973px] shrink-0 flex flex-col border-t border-t-black border-b border-b-black border-r border-r-black">
              <div className="h-[25px] shrink-0 flex items-end pl-[2px] border-b border-b-white">
                <Tab w="w-[131px]" hc="h-[22px]" lc="tracking-[-0.3px]" pl="pl-[12px]" icon={false} close={false} label="Position Summary" popGap="ml-[13px]" />
                <Tab w="w-[90px]" hc="h-[22px]" lc="tracking-[-0.2px]" pl="pl-[14px]" icon={false} close={false} label="Positions" popGap="ml-[10px]" />
                <Tab w="w-[81px]" hc="h-[22px]" lc="tracking-[-0.2px]" pl="pl-[14px]" icon={false} close={false} label="Orders" popGap="ml-[13px]" />
                <Tab w="w-[95px]" hc="h-[22px]" lc="tracking-[-0.2px]" pl="pl-[14px]" icon={false} close={false} label="Messages" popGap="ml-[13px]" />
                <Tab w="w-[112px]" hc="h-[22px]" lc="tracking-[-0.2px]" pl="pl-[13px]" icon={false} label="Strategies" popGap="ml-[13px]" />
                <Tab w="w-[179px]" hc="h-[23px]" lc="tracking-[-0.2px]" pl="pl-[14px]" icon={false} active label="Historical Data Manager" popGap="ml-[13px]" />
              </div>
              <div className="flex-1 flex flex-col pl-[7px]">
                <div className="mt-[11px] flex">
                  <Field label="Date From" ml="">
                    <div className={`w-[67px] h-[20px] bg-white ${sunken} pl-[3px] leading-[17px]`}>2012.01.01</div><Cal />
                  </Field>
                  <Field label="Date To" ml="ml-[6px]">
                    <div className={`w-[67px] h-[20px] bg-white ${sunken} pl-[3px] leading-[17px]`}>2012.02.19</div><Cal />
                  </Field>
                  <Field label="Format" ml="ml-[6px]"><Select w="w-[54px]" h="h-[20px]">CSV</Select></Field>
                  <Field label="Date format" ml="ml-[5px]"><Select w="w-[149px]" h="h-[20px]"><span className="pl-[3px]">YYYY.MM.DD HH:MM:SS</span></Select></Field>
                  <Field label="Delimiter" ml="ml-[6px]"><Select w="w-[53px]" h="h-[20px]">,</Select></Field>
                  <Field label="Bid/Ask" ml="ml-[6px]"><Select w="w-[84px]" h="h-[20px]" dim /></Field>
                  <Field label="Data Type" ml="ml-[6px]"><Select w="w-[114px]" h="h-[20px]">Ticks</Select></Field>
                  <Field label="Value" ml="ml-[6px]"><Select w="w-[115px]" h="h-[20px]" dim /></Field>
                </div>
                <div className="mt-[6px] flex items-center">
                  <Select w="w-[110px]" h="h-[22px]">All Data</Select>
                  <div className="ml-[5px]"><Select w="w-[110px]" h="h-[22px]" dim>All Data</Select></div>
                  <div className={`ml-[5px] w-[613px] h-[22px] bg-white ${sunken} pl-[2px] leading-[19px]`}>Export data to: <span className="border-l border-l-black">D:\</span></div>
                  <div className={`ml-[5px] w-[68px] h-[21px] ${gradBtn}`}>Browse</div>
                </div>
                <div className="mt-[6px] flex items-center">
                  <div className="w-[748px] h-[21px] border-t-2 border-l border-t-[#808080] border-l-[#808080] border-b border-r border-b-white border-r-white" />
                  <div className="ml-[9px] w-[29px]">0%</div>
                  <div className={`w-[64px] h-[20px] ${gradBtn} ${disText}`}>Cancel</div>
                  <div className={`ml-[7px] w-[57px] h-[21px] ${gradBtn}`}>Start</div>
                </div>
                <div className="mt-[7px] w-[915px] h-[195px] flex flex-col border-t border-t-[#808080] border-r border-r-white border-l border-l-[#808080]">
                  <div className="h-[21px] shrink-0 flex">
                    <div className="flex-1 flex border-b-2 border-b-black">
                      <div className={`${raised} w-[39px] flex items-center justify-center`}><Check cls="ml-px" /></div>
                      <div className={`${raised} flex-1 text-center leading-[18px] pl-[2px]`}>Instrument</div>
                    </div>
                    <div className="w-[19px]" />
                  </div>
                  <div className="flex-1 flex min-h-0">
                    <div className="flex-1 bg-white flex flex-col overflow-hidden">
                      {rows.map(([n, on]) => (
                        <div key={n} className="h-[21px] shrink-0 flex items-center border-b border-b-[#888]">
                          <div className="w-[39px] h-full flex items-center justify-center border-r border-r-[#888]"><Check on={!!on} /></div>
                          <div className="pl-px">{n}</div>
                        </div>
                      ))}
                      <div className="flex-1 flex"><div className="w-[39px] border-r border-r-[#888]" /></div>
                    </div>
                    <div className={`w-[19px] flex flex-col ${checker}`}>
                      <ScrollBtn up cls="h-[16px]" />
                      <div className="h-[54px]" />
                      <div className={`${raised} h-[22px]`} />
                      <div className="flex-1" />
                      <ScrollBtn cls="h-[16px]" />
                    </div>
                  </div>
                </div>
              </div>
            </div>
          </div>
        </div>
        {/* status */}
        <div className="h-[22px] shrink-0 flex items-center pl-[4px] pb-[2px] whitespace-nowrap">
          <span>Equity:</span><span className="ml-[4px] text-[#009c00]">USD 50,000.00</span>
          <Sep ml="ml-[8px]" />
          <span className="ml-[6px]">Free Trading Line:</span><span className="ml-[4px] text-[#009c00]">USD 5,000,000.00</span>
          <Sep ml="ml-[7px]" />
          <span className="ml-[6px]">Profit/Loss:</span><span className="ml-[4px] text-[#009c00]">USD 0.00</span>
          <Sep ml="ml-[7px]" />
          <span className="ml-[6px]">Use of Leverage:</span><span className="ml-[6px] text-[#009c00]">0%</span>
          <Sep ml="ml-[9px]" />
          <Check cls="ml-[9px]" on /><span className="ml-[4px]">One Click</span>
          <div className="ml-auto flex items-center pr-[7px]">
            <Sep ml="" />
            <div className="ml-[8px] w-[16px] h-[16px] rounded-full bg-[#29aaf0] text-white font-bold text-center leading-[16px]">S</div>
            <span className="ml-[3px]">Skype</span>
            <Sep ml="ml-[7px]" />
            <div className="ml-[6px] w-[11px] h-[11px] bg-[#00ff00] border border-black" />
            <span className="ml-[3px]">Connected</span>
            <Sep ml="ml-[8px]" />
            <span className="ml-[4px]">Detached: 0</span>
          </div>
        </div>
      </div>
      {/* annotation ring over the panel */}
      <div className="absolute left-[250px] top-[373px] w-[970px] h-[345px] border-[5px] border-[#ff0000] rounded-[52px] pointer-events-none" />
    </div>
  );
}
